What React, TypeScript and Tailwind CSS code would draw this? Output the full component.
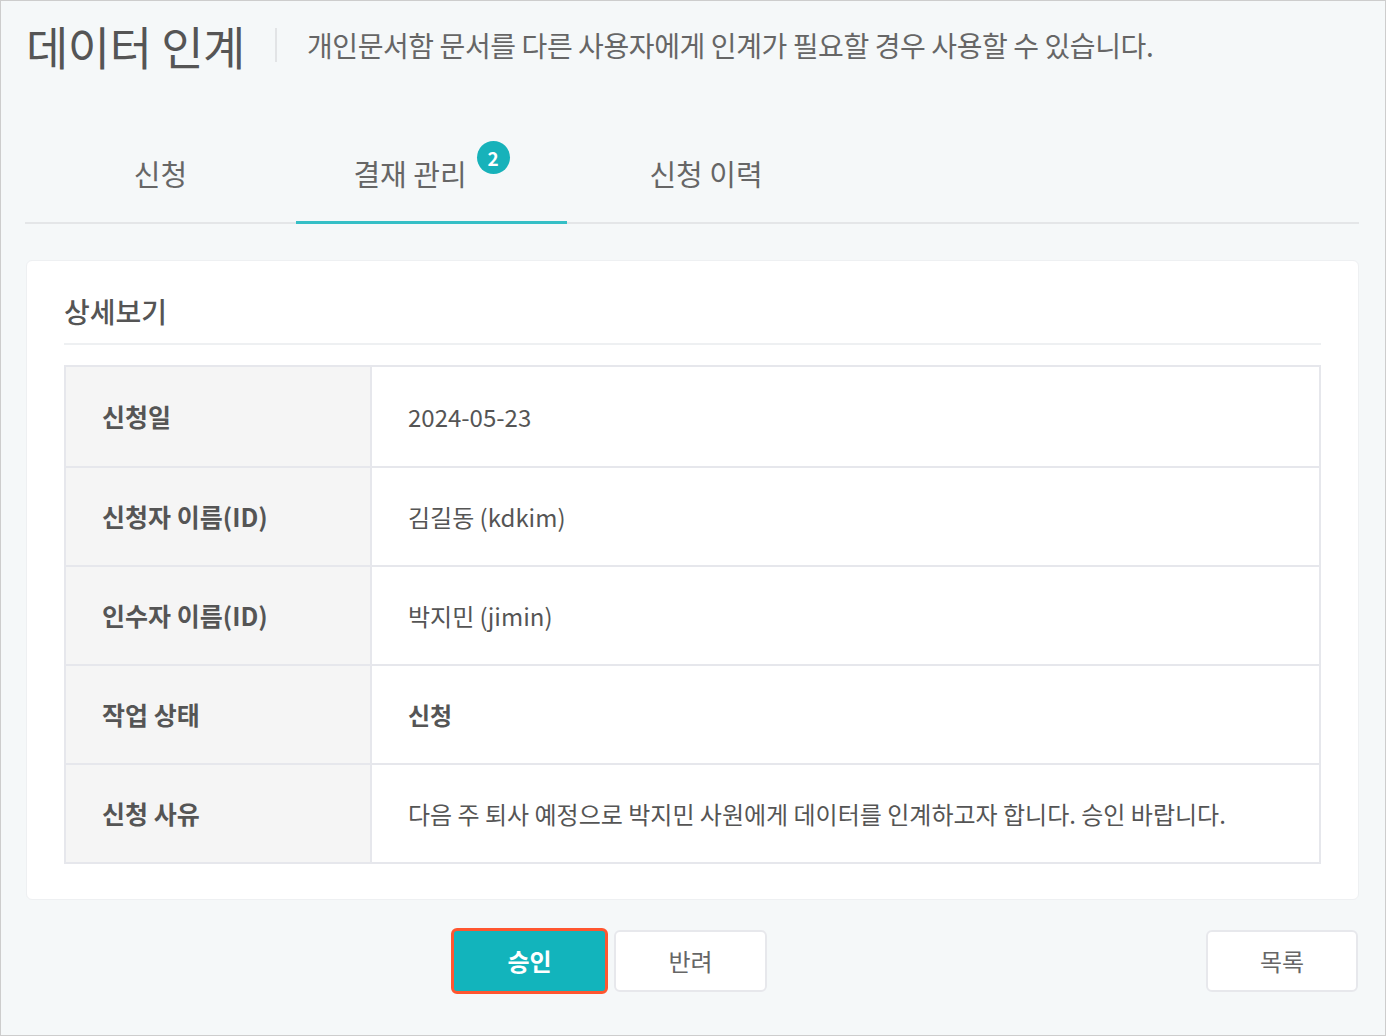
import React from 'react';

const rows: { label: string; value: string; bold?: boolean }[] = [
  { label: '신청일', value: '2024-05-23' },
  { label: '신청자 이름(ID)', value: '김길동 (kdkim)' },
  { label: '인수자 이름(ID)', value: '박지민 (jimin)' },
  { label: '작업 상태', value: '신청', bold: true },
  { label: '신청 사유', value: '다음 주 퇴사 예정으로 박지민 사원에게 데이터를 인계하고자 합니다. 승인 바랍니다.' },
];

const tabs = [
  { name: '신청', width: 'w-[271px]' },
  { name: '결재 관리', width: 'w-[271px]', active: true, badge: 2 },
  { name: '신청 이력', width: 'w-[278px]' },
];

export default function App() {
  return (
    <div
      className="w-[1386px] h-[1036px] border border-[#cdcdcd] bg-[#f5f8f9] text-[#555] overflow-hidden"
      style={{ fontFamily: '"Noto Sans CJK KR", "Noto Sans", sans-serif' }}
    >
      {/* header */}
      <div className="flex items-center pl-[25px] pt-[12px] h-[64px] box-content">
        <h1 className="text-[46px] leading-none font-normal text-[#555] tracking-[-0.5px]">데이터 인계</h1>
        <span className="mx-[30px] w-[2px] h-[34px] bg-[#e2e4e6]" />
        <p className="text-[28px] text-[#666] tracking-[-0.4px]">
          개인문서함 문서를 다른 사용자에게 인계가 필요할 경우 사용할 수 있습니다.
        </p>
      </div>

      {/* tabs */}
      <div className="ml-[24px] mr-[26px] mt-[76px] flex border-b-2 border-[#e4e6e8]">
        {tabs.map((t) => (
          <div
            key={t.name}
            className={`${t.width} flex justify-center pb-[28px] -mb-[2px] border-b-[3px] ${
              t.active ? 'border-[#35bfc6]' : 'border-transparent'
            }`}
          >
            <span className="text-[29px] leading-[40px] text-[#666]">{t.name}</span>
            {t.badge && (
              <span className="ml-[10px] -mt-[12px] w-[33px] h-[33px] rounded-full bg-[#17b2ba] text-white text-[19px] font-bold flex items-center justify-center leading-none">
                {t.badge}
              </span>
            )}
          </div>
        ))}
      </div>

      {/* card */}
      <div className="ml-[25px] mr-[26px] mt-[36px] bg-white rounded-[6px] border border-[#eef0f2] pl-[37px] pr-[37px] pt-[28px] pb-[35px]">
        <h2 className="text-[28px] font-medium text-[#555] leading-[44px] pb-[10px] border-b-2 border-[#eef0f2]">상세보기</h2>
        <div className="mt-[20px] border-2 border-[#e6e7ec]">
          {rows.map((r, i) => (
            <div key={r.label} className={`flex h-[99px] ${i > 0 ? 'border-t-2 border-[#e6e7ec]' : ''}`}>
              <div className="w-[306px] bg-[#f5f5f5] border-r-2 border-[#e6e7ec] flex items-center pl-[36px] text-[25px] font-bold text-[#555]">
                {r.label}
              </div>
              <div
                className={`flex-1 flex items-center pl-[36px] text-[24px] text-[#555] ${r.bold ? 'font-bold' : ''}`}
              >
                {r.value}
              </div>
            </div>
          ))}
        </div>
      </div>

      {/* buttons */}
      <div className="flex items-center mt-[28px] pl-[450px] pr-[27px]">
        <button className="w-[157px] h-[66px] rounded-[6px] border-[3px] border-[#ff5630] bg-[#12b4bc] text-white text-[24px] font-bold">
          승인
        </button>
        <button className="ml-[6px] w-[153px] h-[62px] rounded-[6px] border-2 border-[#e7e8ec] bg-white text-[#666] text-[24px]">
          반려
        </button>
        <div className="flex-1" />
        <button className="w-[152px] h-[62px] rounded-[6px] border-2 border-[#e7e8ec] bg-white text-[#666] text-[24px]">
          목록
        </button>
      </div>
    </div>
  );
}
